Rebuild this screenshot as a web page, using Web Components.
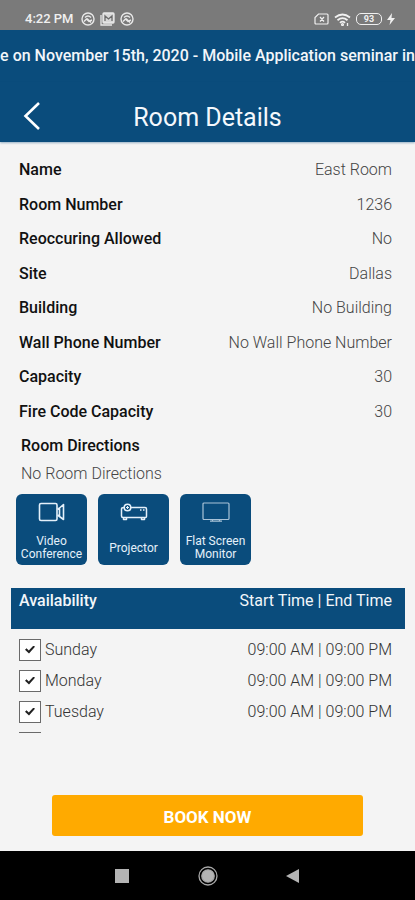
<!DOCTYPE html>
<html lang="en">
<head>
<meta charset="utf-8">
<meta name="viewport" content="width=device-width, initial-scale=1">
<title>Room Details</title>
<style>
    body {
        margin: 0;
        background: #f4f4f4;
        font-family: Roboto, "Liberation Sans", sans-serif;
        font-size: 16px;
        line-height: 20px;
        --brand: #0a4c7c;
        --accent: #ffaa00;
    }
</style>
</head>
<body>
<room-screen>
    <status-bar slot="top" time="4:22 PM" battery="93"></status-bar>
    <news-ticker slot="top">e on November 15th, 2020 - Mobile Application seminar in</news-ticker>
    <app-header slot="top">Room Details</app-header>

    <detail-list>
        <detail-row label="Name">East Room</detail-row>
        <detail-row label="Room Number">1236</detail-row>
        <detail-row label="Reoccuring Allowed">No</detail-row>
        <detail-row label="Site">Dallas</detail-row>
        <detail-row label="Building">No Building</detail-row>
        <detail-row label="Wall Phone Number">No Wall Phone Number</detail-row>
        <detail-row label="Capacity">30</detail-row>
        <detail-row label="Fire Code Capacity">30</detail-row>
    </detail-list>
    <room-directions header="Room Directions">No Room Directions</room-directions>
    <equipment-list>
        <equipment-tile>
            <svg slot="icon" width="28" height="20" viewBox="0 0 28 20" fill="none" stroke="#e4f0fa" stroke-width="1.6" stroke-linejoin="round">
                <rect x="1.5" y="1.5" width="17.500" height="17" rx="1.5"/>
                <path d="M19.500 7.500 21.500 6V14.500L19.500 13M21.500 6 25.500 2.500V17.500L21.500 14.500"/>
            </svg>
            Video Conference
        </equipment-tile>
        <equipment-tile>
            <svg slot="icon" width="28" height="20" viewBox="0 0 28 20" fill="none" stroke="#e4f0fa" stroke-width="1.5" stroke-linejoin="round">
                <path d="M10.500 5.500H25Q26.500 5.500 26.500 7V14.500Q26.500 15.500 25.500 15.500H3Q1.500 15.500 1.500 14V7Q1.500 5.500 4 5.500M3.500 15.500V17.500H6.500V15.500M21.500 15.500V17.500H24.500V15.500M20 8H21.500M23 8H24.500"/>
                <circle cx="7.500" cy="5.500" r="3.300"/>
                <path d="M6 5.500H9M7.500 4V7" stroke-width="1"/>
            </svg>
            Projector
        </equipment-tile>
        <equipment-tile>
            <svg slot="icon" width="28" height="20" viewBox="0 0 28 20" fill="none" stroke="#a9c3d8" stroke-width="1.2">
                <rect x="1" y="1" width="26" height="16.500" rx="1"/>
                <path d="M8 19.200H20M10.500 17.500V19M17.500 17.500V19"/>
            </svg>
            Flat Screen Monitor
        </equipment-tile>
    </equipment-list>
    <availability-table days="Sunday,Monday,Tuesday,Wednesday" hours="09:00 AM | 09:00 PM"></availability-table>

    <book-bar slot="bottom">BOOK NOW</book-bar>
    <nav-bar slot="bottom"></nav-bar>
</room-screen>

<script>
class RoomScreen extends HTMLElement {
    constructor() {
        super();
        this.attachShadow({ mode: 'open' });
        this.shadowRoot.innerHTML = `
            <style>
                :host {
                    display: flex;
                    flex-direction: column;
                    height: 100vh;
                    overflow: hidden;
                }
                main {
                    flex: 1;
                    min-height: 0;
                    display: flex;
                    flex-direction: column;
                    overflow: hidden;
                }
            </style>
            <slot name="top"></slot>
            <main><slot></slot></main>
            <slot name="bottom"></slot>
        `;
    }
}

class StatusBar extends HTMLElement {
    constructor() {
        super();
        this.attachShadow({ mode: 'open' });
        const circleIcon = `
            <svg width="14" height="14" viewBox="0 0 14 14" fill="none" stroke="#e8e8e8" stroke-width="1.4">
                <circle cx="7" cy="7" r="6"/>
                <path d="M3 9.500 5.500 7 8 9.500 11 8M4 5.500Q7 2.500 10 5.500M6 6.500 10 10.500"/>
            </svg>`;
        this.shadowRoot.innerHTML = `
            <style>
                :host {
                    display: flex;
                    justify-content: space-between;
                    align-items: center;
                    height: 22px;
                    padding: 8px 20px 0 25px;
                    background: #7a7a7a;
                    color: #f0f0f0;
                    font-size: 13px;
                    font-weight: 500;
                    flex: none;
                }
                div {
                    display: flex;
                    align-items: center;
                    gap: 5px;
                }
                .time {
                    margin-right: 2px;
                }
                .battery {
                    box-sizing: border-box;
                    width: 26px;
                    height: 12px;
                    border: 1px solid #f0f0f0;
                    border-radius: 5px;
                    font-size: 9px;
                    font-weight: 700;
                    line-height: 10px;
                    text-align: center;
                }
            </style>
            <div>
                <span class="time">${this.getAttribute('time')}</span>
                ${circleIcon}
                <svg width="15" height="14" viewBox="0 0 15 14" fill="none" stroke="#e8e8e8" stroke-width="1.3">
                    <path d="M1 3V13H12"/>
                    <rect x="3" y="1" width="11" height="10" rx="1" fill="#d8d8d8"/>
                    <path d="M5 9V4L8.500 7 12 4V9" stroke="#6a6a6a"/>
                </svg>
                ${circleIcon}
            </div>
            <div>
                <svg width="15" height="12" viewBox="0 0 15 12" fill="none" stroke="#f0f0f0" stroke-width="1.2">
                    <path d="M4.500 1H13Q14 1 14 2V10Q14 11 13 11H2Q1 11 1 10V4.500zM6 4 10 8.500M10 4 6 8.500"/>
                </svg>
                <svg width="17" height="13" viewBox="0 0 17 13" fill="none" stroke="#f0f0f0" stroke-width="1.8">
                    <path d="M1 4.500Q8.500-1.500 16 4.500M3.500 7.200Q8.500 3 13.500 7.200M6 9.800Q8.500 7.500 11 9.800"/>
                    <circle cx="8.500" cy="11.500" r=".7"/>
                    <path d="M13.500 10V13" stroke-width="1.3"/>
                </svg>
                <span class="battery">${this.getAttribute('battery')}</span>
                <svg width="8" height="12" viewBox="0 0 8 12" fill="#f0f0f0"><path d="M5 0 0 7H3.500L2.500 12 8 5H4.500z"/></svg>
            </div>
        `;
    }
}

class NewsTicker extends HTMLElement {
    constructor() {
        super();
        this.attachShadow({ mode: 'open' });
        this.shadowRoot.innerHTML = `
            <style>
                :host {
                    display: flex;
                    justify-content: center;
                    padding: 16px 0;
                    background: var(--brand);
                    color: #f2f6fa;
                    font-weight: 500;
                    white-space: nowrap;
                    overflow: hidden;
                    flex: none;
                }
            </style>
            <slot></slot>
        `;
    }
}

class AppHeader extends HTMLElement {
    constructor() {
        super();
        this.attachShadow({ mode: 'open' });
        this.shadowRoot.innerHTML = `
            <style>
                :host {
                    display: grid;
                    grid-template-columns: 64px 1fr 64px;
                    align-items: center;
                    height: 60px;
                    background: var(--brand);
                    color: #f4f8fc;
                    box-shadow: 0 1px 2px #0a4c7c66;
                    flex: none;
                }
                button {
                    display: flex;
                    justify-content: center;
                    padding: 8px 0 0;
                    border: 0;
                    background: none;
                }
                h1 {
                    margin: 0;
                    padding-top: 12px;
                    font-size: 25px;
                    font-weight: 400;
                    line-height: 30px;
                    text-align: center;
                }
            </style>
            <button aria-label="Back">
                <svg width="18" height="30" viewBox="0 0 18 30" fill="none" stroke="#fff" stroke-width="2.600"><path d="M16 2 2.500 15 16 28"/></svg>
            </button>
            <h1><slot></slot></h1>
        `;
    }
}

class DetailList extends HTMLElement {
    constructor() {
        super();
        this.attachShadow({ mode: 'open' });
        this.shadowRoot.innerHTML = `
            <style>
                :host {
                    display: flex;
                    flex-direction: column;
                    justify-content: space-between;
                    min-height: 262px;
                    padding: 18px 23px 14px 19px;
                    flex: none;
                }
            </style>
            <slot></slot>
        `;
    }
}

class DetailRow extends HTMLElement {
    constructor() {
        super();
        this.attachShadow({ mode: 'open' });
        this.shadowRoot.innerHTML = `
            <style>
                :host {
                    display: flex;
                    justify-content: space-between;
                    gap: 12px;
                }
                .label {
                    color: #111;
                    font-weight: 500;
                }
                .value {
                    color: #444;
                    font-weight: 300;
                    text-align: right;
                }
            </style>
            <span class="label">${this.getAttribute('label')}</span>
            <span class="value"><slot></slot></span>
        `;
    }
}

class RoomDirections extends HTMLElement {
    constructor() {
        super();
        this.attachShadow({ mode: 'open' });
        this.shadowRoot.innerHTML = `
            <style>
                :host {
                    display: block;
                    padding: 0 21px;
                    flex: none;
                }
                h2, p {
                    margin: 0;
                    font-size: 16px;
                }
                h2 {
                    margin-bottom: 8px;
                    color: #111;
                    font-weight: 500;
                }
                p {
                    color: #444;
                    font-weight: 300;
                }
            </style>
            <h2>${this.getAttribute('header')}</h2>
            <p><slot></slot></p>
        `;
    }
}

class EquipmentList extends HTMLElement {
    constructor() {
        super();
        this.attachShadow({ mode: 'open' });
        this.shadowRoot.innerHTML = `
            <style>
                :host {
                    display: flex;
                    gap: 11px;
                    padding: 10px 16px 23px;
                    flex: none;
                }
            </style>
            <slot></slot>
        `;
    }
}

class EquipmentTile extends HTMLElement {
    constructor() {
        super();
        this.attachShadow({ mode: 'open' });
        this.shadowRoot.innerHTML = `
            <style>
                :host {
                    box-sizing: border-box;
                    display: flex;
                    flex-direction: column;
                    align-items: center;
                    gap: 12px;
                    width: 71px;
                    height: 71px;
                    padding: 8px 0 3px;
                    border-radius: 6px;
                    background: var(--brand);
                    color: #e4f0fa;
                    font-size: 12px;
                    line-height: 13px;
                    text-align: center;
                }
                .name {
                    flex: 1;
                    display: flex;
                    align-items: center;
                }
            </style>
            <slot name="icon"></slot>
            <span class="name"><slot></slot></span>
        `;
    }
}

class AvailabilityTable extends HTMLElement {
    constructor() {
        super();
        this.attachShadow({ mode: 'open' });
        const hours = this.getAttribute('hours');
        const rows = this.getAttribute('days').split(',').map(day => `
            <tr>
                <td><label><input type="checkbox" checked>${day}</label></td>
                <td class="hours">${hours}</td>
            </tr>
        `).join('');

        this.shadowRoot.innerHTML = `
            <style>
                :host {
                    display: block;
                    flex: 1;
                    min-height: 0;
                    padding: 0 10px 0 11px;
                    overflow-y: auto;
                    scrollbar-width: none;
                }
                table {
                    width: 100%;
                    border-collapse: collapse;
                }
                th {
                    height: 38px;
                    padding: 3px 13px 0 8px;
                    background: var(--brand);
                    color: #f2f6fa;
                    font-weight: 500;
                    text-align: left;
                    vertical-align: top;
                }
                th.hours {
                    font-weight: 400;
                }
                tbody::before {
                    content: "";
                    display: table-row;
                    height: 5px;
                }
                td {
                    height: 31px;
                    padding: 0 13px 0 8px;
                    color: #333;
                    font-weight: 300;
                }
                .hours {
                    text-align: right;
                }
                label {
                    display: flex;
                    align-items: center;
                    gap: 4px;
                }
                input {
                    appearance: none;
                    display: grid;
                    place-items: center;
                    width: 22px;
                    height: 22px;
                    margin: 0;
                    border: 1px solid #6a6a6a;
                    background: #fff;
                }
                input:checked::before {
                    content: "";
                    width: 10px;
                    height: 8px;
                    background: #222;
                    clip-path: polygon(0 52%, 15% 35%, 38% 62%, 85% 0, 100% 16%, 40% 100%);
                }
            </style>
            <table>
                <thead><tr><th>Availability</th><th class="hours">Start Time | End Time</th></tr></thead>
                <tbody>${rows}</tbody>
            </table>
        `;
    }
}

class BookBar extends HTMLElement {
    constructor() {
        super();
        this.attachShadow({ mode: 'open' });
        this.shadowRoot.innerHTML = `
            <style>
                :host {
                    display: flex;
                    justify-content: center;
                    padding: 62px 0 15px;
                    flex: none;
                }
                button {
                    width: 75%;
                    height: 41px;
                    padding: 3px 0 0;
                    border: 0;
                    border-radius: 3px;
                    background: var(--accent);
                    color: #fff;
                    font: 700 17px/20px Roboto, "Liberation Sans", sans-serif;
                }
            </style>
            <button><slot></slot></button>
        `;
    }
}

class NavBar extends HTMLElement {
    constructor() {
        super();
        this.attachShadow({ mode: 'open' });
        this.shadowRoot.innerHTML = `
            <style>
                :host {
                    display: flex;
                    justify-content: center;
                    align-items: center;
                    gap: 65px;
                    height: 49px;
                    background: #000;
                    flex: none;
                }
                button {
                    display: flex;
                    padding: 0;
                    border: 0;
                    background: none;
                }
            </style>
            <button aria-label="Recent apps"><svg width="20" height="20" fill="#b4b4b4"><rect x="2" y="3" width="14" height="14"/></svg></button>
            <button aria-label="Home">
                <svg width="20" height="20" fill="#b4b4b4" stroke="#a8a8a8" stroke-width="1.3"><circle cx="10" cy="10" r="9" fill="none"/><circle cx="10" cy="10" r="6.200"/></svg>
            </button>
            <button aria-label="Back"><svg width="20" height="20" fill="#b4b4b4"><path d="M3 10 16 3V17z"/></svg></button>
        `;
    }
}

customElements.define('room-screen', RoomScreen);
customElements.define('status-bar', StatusBar);
customElements.define('news-ticker', NewsTicker);
customElements.define('app-header', AppHeader);
customElements.define('detail-list', DetailList);
customElements.define('detail-row', DetailRow);
customElements.define('room-directions', RoomDirections);
customElements.define('equipment-list', EquipmentList);
customElements.define('equipment-tile', EquipmentTile);
customElements.define('availability-table', AvailabilityTable);
customElements.define('book-bar', BookBar);
customElements.define('nav-bar', NavBar);
</script>
</body>
</html>
